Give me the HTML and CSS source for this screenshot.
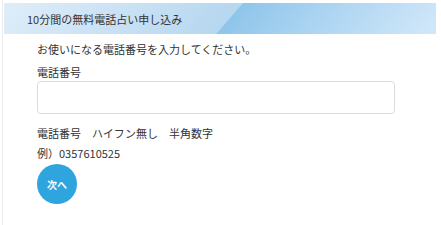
FILE: index.html
```html
<!DOCTYPE html>
<html lang="ja">
<head>
  <meta charset="UTF-8" />
  <meta name="viewport" content="width=device-width, initial-scale=1.0" />
  <title>10分間の無料電話占い申し込み</title>
  <link rel="stylesheet" href="styles.css">
</head>
<body>
  <section class="panel">
    <header class="panel-head">
      <h2>10分間の無料電話占い申し込み</h2>
    </header>

    <form class="tel-form">
      <p class="lead">お使いになる電話番号を入力してください。</p>
      <label for="tel">電話番号</label>
      <input type="tel" id="tel">
      <p class="hint">電話番号　ハイフン無し　半角数字<br>例）0357610525</p>
      <button class="btn-next" type="submit">次へ</button>
    </form>
  </section>
</body>
</html>
```

FILE: styles.css
```css
* {
  margin: 0;
  padding: 0;
  box-sizing: border-box;
}

body {
  font-family: "Noto Sans CJK JP", "Noto Sans", sans-serif;
  font-size: 11px;
  color: #333;
  background: #fff;
}

.panel {
  margin-left: 2px;
  min-height: 225px;
  border-left: 1px solid #ececec;
  padding: 3px 5px 0 1px;
}

.panel-head {
  height: 31px;
  padding-left: 23px;
  display: flex;
  align-items: center;
  background: linear-gradient(131deg, #dfedf9 0%, #b6d7f0 52%, #8fc5eb 52.2%, #a9d3f1 70%, #d2e8f9 100%);
}

.panel-head h2 {
  font-size: 11px;
  font-weight: normal;
  color: #333;
}

.tel-form {
  padding: 6px 0 0 33px;
}

.lead {
  line-height: 18px;
}

.tel-form label {
  display: block;
  margin-top: 6px;
  line-height: 17px;
}

.tel-form input {
  display: block;
  width: 358px;
  height: 33px;
  border: 1px solid #dcdcdc;
  border-radius: 4px;
  padding: 0 8px;
  font: inherit;
}

.hint {
  margin-top: 9px;
  line-height: 20px;
}

.btn-next {
  display: flex;
  align-items: center;
  justify-content: center;
  width: 40px;
  height: 40px;
  margin-top: 1px;
  border: 0;
  border-radius: 50%;
  background: #2fa5df;
  color: #fff;
  font: bold 10px "Noto Sans CJK JP", sans-serif;
}
```
